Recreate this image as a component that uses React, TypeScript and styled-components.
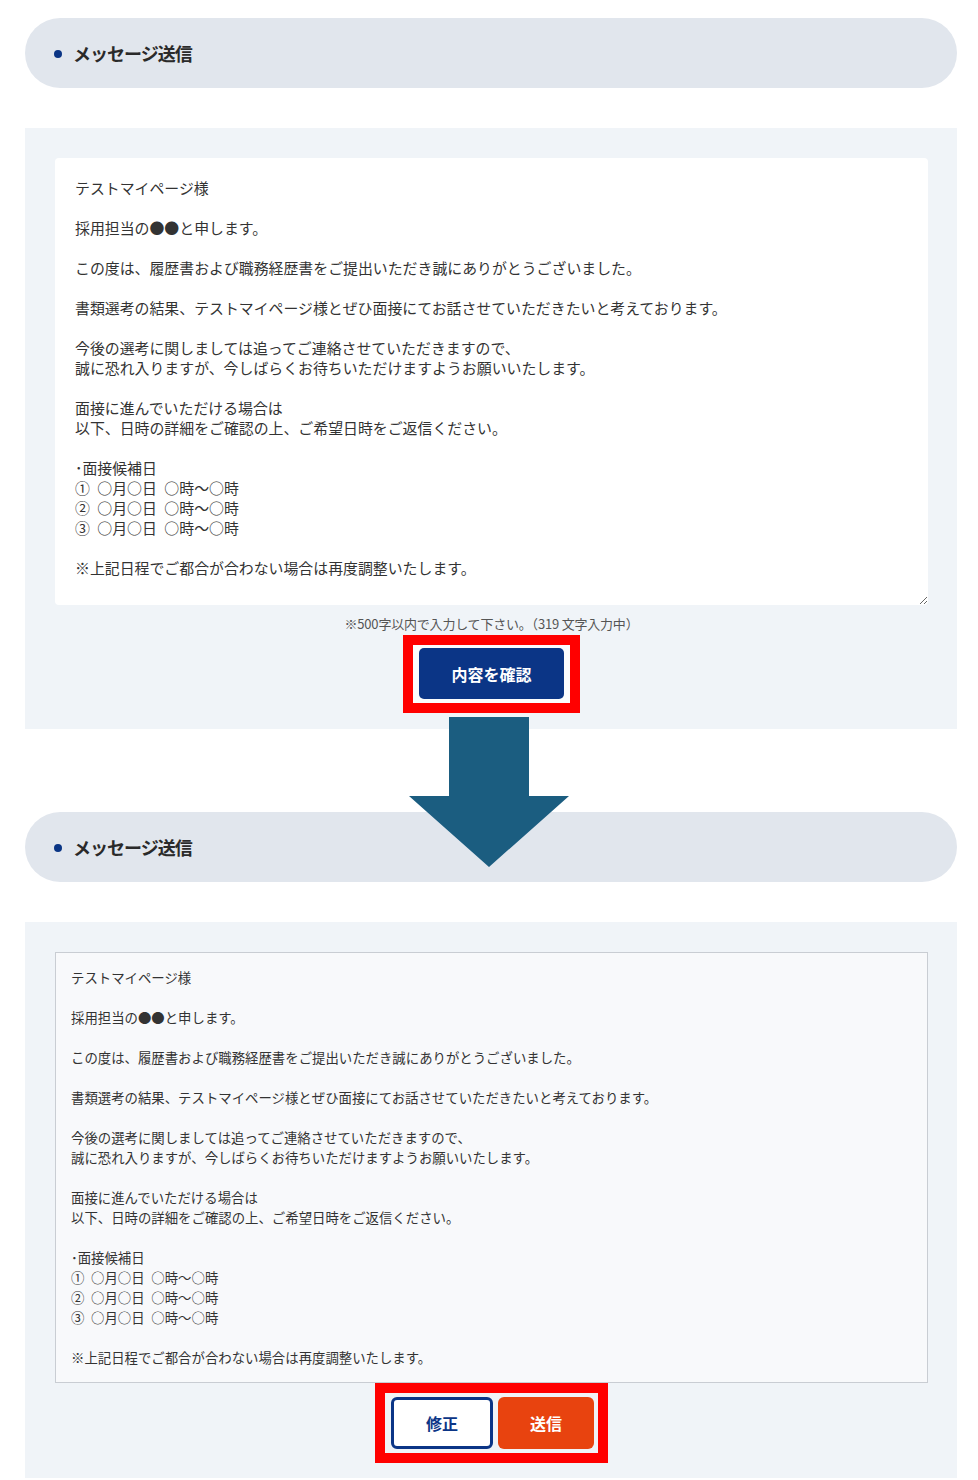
import React from "react";
import styled, { createGlobalStyle } from "styled-components";

const GlobalStyle = createGlobalStyle`
  html, body { margin: 0; padding: 0; background: #ffffff; }
  body { font-family: "Noto Sans CJK JP", "Noto Sans", sans-serif; color: #333; }
  * { box-sizing: border-box; }
`;

const Page = styled.div`
  width: 978px;
  padding: 18px 21px 0 25px;
  display: flex;
  flex-direction: column;
`;

const SectionHeader = styled.div`
  height: 70px;
  border-radius: 35px;
  background: #e1e6ed;
  display: flex;
  align-items: center;
  gap: 11px;
  padding-left: 29px;
  position: relative;
  z-index: 1;
`;

const Dot = styled.span`
  width: 8px;
  height: 8px;
  border-radius: 50%;
  background: #0a3585;
  margin-top: 1px;
`;

const HeaderTitle = styled.h2`
  margin: 0;
  font-size: 18px;
  font-weight: 700;
  color: #2a2a2a;
  letter-spacing: -1px;
`;

const Panel = styled.section<{ $bottom: number }>`
  margin-top: 40px;
  background: #f0f4f8;
  padding: 30px 29px ${(p) => p.$bottom}px 30px;
  display: flex;
  flex-direction: column;
  align-items: center;
`;

const MessageInput = styled.textarea`
  width: 100%;
  height: 447px;
  border: none;
  border-radius: 4px;
  background: #ffffff;
  padding: 20px 20px;
  font-family: "Noto Sans CJK JP", "Noto Sans", sans-serif;
  font-size: 14.9px;
  line-height: 20px;
  color: #333;
  resize: vertical;
  outline: none;
  overflow: hidden;
  display: block;
`;

const CountNote = styled.p`
  margin: 8px 0 0;
  height: 22px;
  line-height: 22px;
  font-size: 13px;
  color: #555;
  letter-spacing: -0.2px;
`;

const Highlight = styled.div<{ $inner: string; $pad: string }>`
  border: 10px solid #ff0000;
  background: ${(p) => p.$inner};
  padding: ${(p) => p.$pad};
  display: flex;
  gap: 5px;
`;

const PrimaryButton = styled.button`
  width: 145px;
  height: 51px;
  border: none;
  border-radius: 5px;
  background: #0b3586;
  color: #fff;
  font-family: "Noto Sans CJK JP", "Noto Sans", sans-serif;
  font-size: 16px;
  font-weight: 700;
  cursor: pointer;
`;

const ActionButton = styled.button<{ $variant: "edit" | "send"; $w: number }>`
  width: ${(p) => p.$w}px;
  height: 52px;
  border-radius: 6px;
  font-family: "Noto Sans CJK JP", "Noto Sans", sans-serif;
  font-size: 16px;
  font-weight: 700;
  cursor: pointer;
  ${(p) =>
    p.$variant === "edit"
      ? `background: #ffffff; color: #0b3586; border: 3px solid #0b3586;`
      : `background: #e8430f; color: #ffffff; border: none;`}
`;

const Transition = styled.div`
  height: 83px;
  position: relative;
`;

const ArrowMark = styled.svg`
  position: absolute;
  top: -12px;
  left: 50%;
  transform: translateX(-50%);
  margin-left: -2px;
  z-index: 2;
  display: block;
`;

const ConfirmBox = styled.div`
  width: 100%;
  border: 1px solid #c9cdd3;
  background: #f8f9fb;
  padding: 14px 15px 15px;
  font-size: 13.4px;
  line-height: 20px;
  color: #333;
  white-space: pre-wrap;
`;

const message = `テストマイページ様

採用担当の●●と申します。

この度は、履歴書および職務経歴書をご提出いただき誠にありがとうございました。

書類選考の結果、テストマイページ様とぜひ面接にてお話させていただきたいと考えております。

今後の選考に関しましては追ってご連絡させていただきますので、
誠に恐れ入りますが、今しばらくお待ちいただけますようお願いいたします。

面接に進んでいただける場合は
以下、日時の詳細をご確認の上、ご希望日時をご返信ください。

･面接候補日
①\u2002○月○日\u2002○時～○時
②\u2002○月○日\u2002○時～○時
③\u2002○月○日\u2002○時～○時

※上記日程でご都合が合わない場合は再度調整いたします。`;

function Header() {
  return (
    <SectionHeader>
      <Dot />
      <HeaderTitle>メッセージ送信</HeaderTitle>
    </SectionHeader>
  );
}

export default function App() {
  return (
    <>
      <GlobalStyle />
      <Page>
        <Header />
        <Panel $bottom={16}>
          <MessageInput defaultValue={message} readOnly />
          <CountNote>※500字以内で入力して下さい。（319 文字入力中）</CountNote>
          <Highlight $inner="#fbfcfd" $pad="3px 6px 4px">
            <PrimaryButton>内容を確認</PrimaryButton>
          </Highlight>
        </Panel>
        <Transition>
          <ArrowMark width="160" height="150" viewBox="0 0 160 150">
            <polygon points="40,0 120,0 120,79 160,79 80,150 0,79 40,79" fill="#1b5d80" />
          </ArrowMark>
        </Transition>
        <Header />
        <Panel $bottom={15}>
          <ConfirmBox>{message}</ConfirmBox>
          <Highlight $inner="#f0f3f7" $pad="4px 4px 4px 6px">
            <ActionButton $variant="edit" $w={102}>修正</ActionButton>
            <ActionButton $variant="send" $w={96}>送信</ActionButton>
          </Highlight>
        </Panel>
      </Page>
    </>
  );
}
